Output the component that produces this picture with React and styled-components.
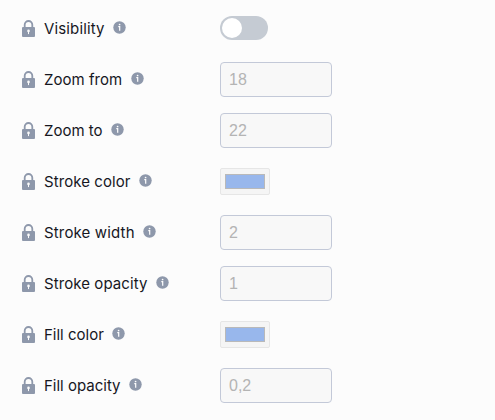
import React from "react";
import styled, { createGlobalStyle } from "styled-components";

const GlobalStyle = createGlobalStyle`
  * { box-sizing: border-box; }
  body { margin: 0; background: #fcfcfc; font-family: Inter, sans-serif; }
`;

const Panel = styled.main`
  min-height: 420px;
  padding: 3px 20px 0;
  display: flex;
  flex-direction: column;
`;

const Row = styled.div`
  height: 51px;
  flex: none;
  display: grid;
  grid-template-columns: 200px auto;
  align-items: center;
  justify-content: start;
`;

const Label = styled.div`
  display: flex;
  align-items: center;
  color: #16171f;
  font-size: 15px;
  line-height: 20px;
  white-space: nowrap;
`;

const Name = styled.span`
  letter-spacing: ${({ $tracking }) => $tracking || 0}px;
`;

const LockIcon = styled.svg`
  width: 16px;
  height: 18px;
  margin-right: 8px;
  flex: none;
`;

const InfoIcon = styled.svg`
  width: 13px;
  height: 13px;
  margin: 0 0 2px 8.4px;
  flex: none;
`;

const Toggle = styled.button`
  width: 48px;
  height: 24px;
  margin-bottom: 1px;
  padding: 2px;
  border: 0;
  border-radius: 12px;
  background: #c5cbd3;
  display: flex;
`;

const Knob = styled.span`
  width: 20px;
  height: 20px;
  border-radius: 50%;
  background: #fff;
`;

const Input = styled.input`
  width: 112px;
  height: 35px;
  padding: 0 8px;
  border: 1px solid #c3c9d8;
  border-radius: 4px;
  background: #f8f8f8;
  color: #b4b4b4;
  font: 16px "Liberation Sans", Arial, sans-serif;
`;

const ColorWell = styled.button`
  width: 50px;
  height: 27px;
  padding: 5px 4px;
  border: 1px solid #e6e6e6;
  border-radius: 2px;
  background: #f5f5f5;
  display: flex;
`;

const Swatch = styled.span`
  flex: 1;
  align-self: stretch;
  border: 1px solid #b9b9b9;
  background: #98b7ec;
`;

const rows = [
  { label: "Visibility", type: "toggle", tracking: 0.14 },
  { label: "Zoom from", value: "18", tracking: 0.03 },
  { label: "Zoom to", value: "22" },
  { label: "Stroke color", type: "color", tracking: 0.08 },
  { label: "Stroke width", value: "2", tracking: 0.15 },
  { label: "Stroke opacity", value: "1", tracking: 0.08 },
  { label: "Fill color", type: "color" },
  { label: "Fill opacity", value: "0,2" },
];

function Lock() {
  return (
    <LockIcon viewBox="0 0 16 18">
      <path d="M4.7 8V4.8a3.8 3.8 0 0 1 7.6 0V8" fill="none" stroke="#8e98ab" strokeWidth="1.8" />
      <rect x="2" y="7" width="13" height="10" rx="1" fill="#8e98ab" />
      <circle cx="8.5" cy="10.9" r="1.3" fill="#fcfcfc" />
      <path d="M8.5 11v3.1" stroke="#fcfcfc" strokeWidth="1" />
    </LockIcon>
  );
}

function Info() {
  return (
    <InfoIcon viewBox="0 0 13 13">
      <circle cx="6.5" cy="6.5" r="6.2" fill="#8e98ab" />
      <path d="M5.3 5.7h1.4v4" fill="none" stroke="#fff" strokeWidth="1.2" />
      <circle cx="6.6" cy="3.5" r=".85" fill="#fff" />
    </InfoIcon>
  );
}

function Control({ type, value, label }) {
  if (type === "toggle") return <Toggle aria-label={label}><Knob /></Toggle>;
  if (type === "color") return <ColorWell aria-label={label}><Swatch /></ColorWell>;
  return <Input aria-label={label} defaultValue={value} disabled />;
}

export default function App() {
  return (
    <>
      <GlobalStyle />
      <Panel>
        {rows.map(({ tracking, ...row }) => (
          <Row key={row.label}>
            <Label>
              <Lock />
              <Name $tracking={tracking}>{row.label}</Name>
              <Info />
            </Label>
            <Control {...row} />
          </Row>
        ))}
      </Panel>
    </>
  );
}
